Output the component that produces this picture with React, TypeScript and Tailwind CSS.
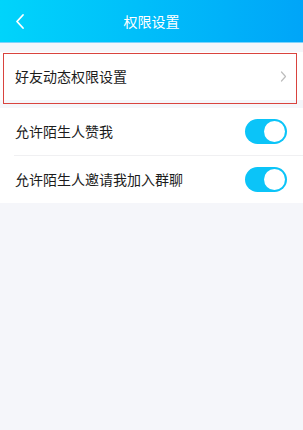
import React from "react";

function Toggle() {
  return (
    <div className="relative w-[42px] h-[25px] rounded-full bg-[#0bc4f8]">
      <div className="absolute right-[2px] top-[2px] w-[21px] h-[21px] rounded-full bg-white" />
    </div>
  );
}

export default function App() {
  const font = { fontFamily: '"Noto Sans CJK SC", "Noto Sans", sans-serif' };
  return (
    <div className="w-[303px] h-[430px] bg-[#f5f6fa] overflow-hidden" style={font}>
      <div className="relative h-[42px] bg-gradient-to-r from-[#00d4fb] to-[#00a5f8] flex items-center justify-center">
        <svg className="absolute left-[14px] top-[13px]" width="12" height="17" viewBox="0 0 12 17">
          <path d="M9 2 L3 8.5 L9 15" fill="none" stroke="white" strokeWidth="1.8" strokeLinecap="round" strokeLinejoin="round" />
        </svg>
        <span className="text-white text-[14px] leading-none">权限设置</span>
      </div>
      <div className="h-[10px] border-t border-[#7fd3fb]" />
      <div className="relative">
        <div className="h-[48px] bg-white flex items-center justify-between pl-[15px] pr-[16px]">
          <span className="text-[14px] text-[#1c1c1c]">好友动态权限设置</span>
          <svg width="7" height="11" viewBox="0 0 7 11">
            <path d="M1.5 1 L5.5 5.5 L1.5 10" fill="none" stroke="#bdbdbd" strokeWidth="1.2" strokeLinecap="round" strokeLinejoin="round" />
          </svg>
        </div>
        <div className="absolute left-[3px] top-[1px] w-[294px] h-[51px] border-[1.5px] border-[#d9433e] pointer-events-none" />
      </div>
      <div className="h-[8px]" />
      <div className="bg-white">
        <div className="h-[47px] flex items-center justify-between pl-[15px] pr-[16px]">
          <span className="text-[14px] text-[#1c1c1c]">允许陌生人赞我</span>
          <Toggle />
        </div>
        <div className="ml-[14px] h-px bg-[#f0f0f2]" />
        <div className="h-[47px] flex items-center justify-between pl-[15px] pr-[16px]">
          <span className="text-[14px] text-[#1c1c1c]">允许陌生人邀请我加入群聊</span>
          <Toggle />
        </div>
      </div>
    </div>
  );
}
